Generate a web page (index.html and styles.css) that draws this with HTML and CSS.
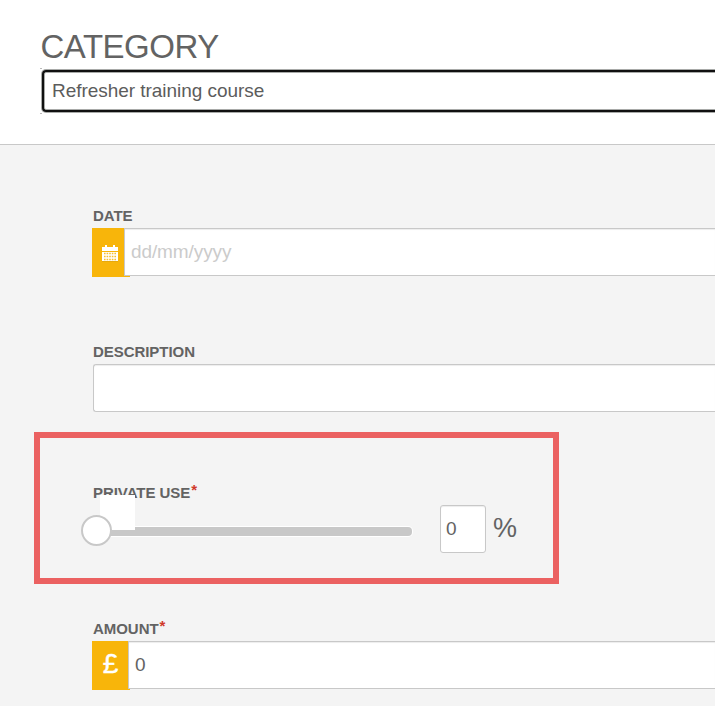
FILE: index.html
```html
<!DOCTYPE html>
<html lang="en">
<head>
<meta charset="utf-8">
<title>Expense</title>
<link rel="stylesheet" href="styles.css">
</head>
<body>
<header class="category">
  <h1 class="category-title">CATEGORY</h1>
  <div class="category-frame"><div class="category-select">Refresher training course</div></div>
</header>
<main class="form">
  <section class="field date">
    <div class="label">DATE</div>
    <div class="group">
      <div class="addon addon-date">
        <svg class="calendar" width="16" height="18" viewBox="0 0 16 18">
          <path d="M0 2h16v4H0zM3 0h2v3H3zM11 0h2v3h-2z" fill="#fff"/>
          <path d="M0 7h16v9H0z" fill="#fff"/>
          <path d="M2 8.5h12M2 11.5h12M2 14.5h12" stroke="#f8b50a" stroke-width="1.5" stroke-dasharray="1.6 1" opacity=".85"/>
          <path d="M0 16.5h16" stroke="#dca20c" stroke-width="1" opacity=".6"/>
        </svg>
      </div>
      <div class="input placeholder">dd/mm/yyyy</div>
    </div>
  </section>
  <section class="field description">
    <div class="label">DESCRIPTION</div>
    <div class="input rounded"></div>
  </section>
  <section class="private">
    <div class="label">PRIVATE USE<span class="required">*</span></div>
    <div class="slider-row">
      <div class="slider">
        <div class="track"></div>
        <div class="tip"></div>
        <div class="handle"></div>
      </div>
      <div class="percent-input">0</div>
      <div class="percent">%</div>
    </div>
  </section>
  <section class="field amount">
    <div class="label">AMOUNT<span class="required">*</span></div>
    <div class="group">
      <div class="addon addon-pound">£</div>
      <div class="input value">0</div>
    </div>
  </section>
</main>
</body>
</html>
```

FILE: styles.css
```css
* { box-sizing: border-box; }
body {
  margin: 0;
  width: 715px;
  height: 706px;
  overflow: hidden;
  background: #f4f4f4;
  color: #636363;
  font-family: "Liberation Sans", Arial, sans-serif;
}
.category {
  height: 145px;
  padding: 28px 0 0 40px;
  background: #fff;
  border-bottom: 1px solid #c8c8c8;
}
.category-title {
  margin: 0;
  height: 40px;
  font-size: 33px;
  line-height: 38px;
  font-weight: 400;
  letter-spacing: -0.5px;
  text-indent: 0.5px;
}
.category-frame {
  height: 46px;
  padding: 2px 0 0 2px;
  background:
    linear-gradient(#bbb, #bbb) 0 0 / 2px 1px no-repeat,
    linear-gradient(#bbb, #bbb) 0 100% / 2px 1px no-repeat;
}
.category-select {
  height: 42px;
  padding-left: 8px;
  border: 2px solid #101010;
  border-right: 0;
  border-radius: 4px 0 0 4px;
  box-shadow: 0 0 0 1px #a8aaa8, inset 0 1px #a8aaa8, inset 0 -1px #a8aaa8, inset 1px 0 #a8aaa8;
  font-size: 19px;
  letter-spacing: -0.04px;
  line-height: 38px;
  color: #5c5c5c;
}
.form { padding-top: 62px; }
.field { padding-left: 93px; }
.label {
  height: 21px;
  font-size: 15px;
  line-height: 18px;
  font-weight: 700;
  letter-spacing: -0.05px;
  white-space: nowrap;
}
.required {
  color: #d0392b;
  font-size: 15px;
  font-weight: 700;
  line-height: 1;
  position: relative;
  top: -3px;
  left: 1px;
}
.group { display: flex; height: 49px; margin-left: -1px; }
.addon {
  display: flex;
  align-items: center;
  justify-content: center;
  flex: none;
  width: 38px;
  height: 49px;
  background: #f8b50a;
  color: #fff;
}
.addon-date { padding: 3px 2px 0 0; }
.addon-date + .input { margin-left: -6px; }
.addon-pound {
  padding: 0 1px 3px 0;
  font-size: 28px;
  -webkit-text-stroke: 0.4px #fff;
}
.addon-pound + .input { margin-left: -2px; }
.input {
  flex: 1;
  height: 48px;
  position: relative;
  padding-left: 6px;
  background: #fff;
  border: 1px solid #c8c8c8;
  border-right: 0;
  box-shadow: inset 0 1px 1px #ededed;
  font-size: 19px;
  line-height: 46px;
}
.rounded { border-radius: 3px 0 0 3px; }
.placeholder { color: #cbcbcb; letter-spacing: -0.1px; }
.date { height: 136px; }
.description { height: 89px; }
.private {
  width: 525px;
  height: 152px;
  margin-left: 34px;
  padding: 46px 0 0 53px;
  border: 6px solid #eb6161;
}
.slider-row { display: flex; height: 48px; }
.slider {
  position: relative;
  width: 319px;
  padding-top: 22px;
}
.track {
  height: 9px;
  border-radius: 0 4px 4px 0;
  background: #c8c8c8;
  box-shadow: 0 0 0 1px #fff;
}
.tip {
  position: absolute;
  left: 7px;
  top: -10px;
  width: 35px;
  height: 35px;
  background: #fff;
}
.handle {
  position: absolute;
  left: -12px;
  top: 10px;
  width: 31px;
  height: 31px;
  border: 2px solid #c8c8c8;
  border-radius: 50%;
  background: #fff;
}
.percent-input {
  width: 46px;
  height: 48px;
  margin-left: 28px;
  padding-left: 5px;
  border: 1px solid #c8c8c8;
  border-radius: 3px;
  background: #fff;
  box-shadow: inset 0 1px 1px #ededed;
  font-size: 19px;
  line-height: 46px;
}
.percent { margin-left: 7px; font-size: 27px; line-height: 46px; }
.amount { padding-top: 36px; }
```
